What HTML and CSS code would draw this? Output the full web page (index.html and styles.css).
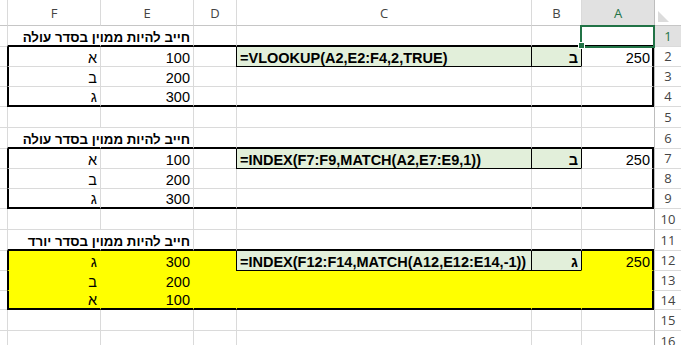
FILE: index.html
```
<!DOCTYPE html>
<html lang="he">
<head>
  <meta charset="UTF-8">
  <title>VLOOKUP / INDEX MATCH</title>
  <link rel="stylesheet" href="styles.css">
</head>
<body>
  <div class="sheet">
    <!-- column headers -->
    <div class="rn corner"><svg width="11" height="11"><polygon points="0,0 0,11 11,11" fill="#dcdcdc"/></svg></div>
    <div class="hd on">A</div><div class="hd">B</div><div class="hd">C</div><div class="hd">D</div><div class="hd">E</div><div class="hd">F</div><div class="hd"></div>

    <!-- 1 -->
    <div class="rn on">1</div>
    <div class="tb cur"></div><div class="tb"></div><div class="tb"></div><div class="tb"></div><div class="tb sp b"><span class="note">חייב להיות ממוין בסדר עולה</span></div><div class="tb"></div><div></div>
    <!-- 2 -->
    <div class="rn">2</div>
    <div class="rb gl"><span>250</span></div><div class="res b"><span>ב</span></div><div class="res b" dir="ltr"><span>=VLOOKUP(A2,E2:F4,2,TRUE)</span></div><div></div><div><span>100</span></div><div class="lb"><span>א</span></div><div></div>
    <!-- 3 -->
    <div class="rn">3</div>
    <div class="rb"></div><div></div><div></div><div></div><div><span>200</span></div><div class="lb"><span>ב</span></div><div></div>
    <!-- 4 -->
    <div class="rn">4</div>
    <div class="rb bb"></div><div class="bb"></div><div class="bb"></div><div class="bb"></div><div class="bb"><span>300</span></div><div class="lb bb"><span>ג</span></div><div></div>
    <!-- 5 -->
    <div class="rn">5</div>
    <div></div><div></div><div></div><div></div><div></div><div></div><div></div>
    <!-- 6 -->
    <div class="rn">6</div>
    <div class="tb"></div><div class="tb"></div><div class="tb"></div><div class="tb"></div><div class="tb sp b"><span class="note">חייב להיות ממוין בסדר עולה</span></div><div class="tb"></div><div></div>
    <!-- 7 -->
    <div class="rn">7</div>
    <div class="rb gl"><span>250</span></div><div class="res b"><span>ב</span></div><div class="res b" dir="ltr"><span>=INDEX(F7:F9,MATCH(A2,E7:E9,1))</span></div><div></div><div><span>100</span></div><div class="lb"><span>א</span></div><div></div>
    <!-- 8 -->
    <div class="rn">8</div>
    <div class="rb"></div><div></div><div></div><div></div><div><span>200</span></div><div class="lb"><span>ב</span></div><div></div>
    <!-- 9 -->
    <div class="rn">9</div>
    <div class="rb bb"></div><div class="bb"></div><div class="bb"></div><div class="bb"></div><div class="bb"><span>300</span></div><div class="lb bb"><span>ג</span></div><div></div>
    <!-- 10 -->
    <div class="rn">10</div>
    <div></div><div></div><div></div><div></div><div></div><div></div><div></div>
    <!-- 11 -->
    <div class="rn">11</div>
    <div class="tb"></div><div class="tb"></div><div class="tb"></div><div class="tb"></div><div class="tb sp b"><span class="note">חייב להיות ממוין בסדר יורד</span></div><div class="tb"></div><div></div>
    <!-- 12 -->
    <div class="rn">12</div>
    <div class="y rb gl"><span>250</span></div><div class="res b"><span>ג</span></div><div class="res b" dir="ltr"><span>=INDEX(F12:F14,MATCH(A12,E12:E14,-1))</span></div><div class="y"></div><div class="y"><span>300</span></div><div class="y lb"><span>ג</span></div><div></div>
    <!-- 13 -->
    <div class="rn">13</div>
    <div class="y rb"></div><div class="y"></div><div class="y"></div><div class="y"></div><div class="y"><span>200</span></div><div class="y lb"><span>ב</span></div><div></div>
    <!-- 14 -->
    <div class="rn">14</div>
    <div class="y rb bb"></div><div class="y bb"></div><div class="y bb"></div><div class="y bb"></div><div class="y bb"><span>100</span></div><div class="y lb bb"><span>א</span></div><div></div>
    <!-- 15 -->
    <div class="rn">15</div>
    <div></div><div></div><div></div><div></div><div></div><div></div><div></div>
    <!-- 16 -->
    <div class="rn">16</div>
    <div></div><div></div><div></div><div></div><div></div><div></div><div></div>
  </div>
</body>
</html>
```

FILE: styles.css
```
body {
  margin: 0;
  background: #fff;
  overflow: hidden;
}
.sheet {
  display: grid;
  direction: rtl;
  grid-template-columns: 27px 73px 50px 295px 43px 93px 93px 7px;
  grid-template-rows: 26px 21px 20px 20px 20px 21px 21px 20px 20px 20px 21px 21px 20px 20px 19px 21px 21px;
  font-family: "Liberation Sans", Arial, sans-serif;
  font-size: 14.5px;
  line-height: 15px;
  color: #000;
}
.sheet > div {
  box-sizing: border-box;
  display: flex;
  align-items: flex-end;
  padding: 0 3px;
  border-left: 1px solid #dadada;
  border-bottom: 1px solid #dadada;
  white-space: nowrap;
  min-width: 0;
}
/* last partial column has no left gridline */
.sheet > div:nth-child(8n) {
  border-left: 0;
  padding: 0;
}
.hd {
  font-family: "Open Sans", sans-serif;
  font-size: 13px;
  color: #444;
  justify-content: center;
  padding-bottom: 4px !important;
  border-bottom-color: #c6c6c6 !important;
}
.rn {
  font-family: "Open Sans", sans-serif;
  font-size: 13px;
  color: #444;
  justify-content: center;
  align-items: center !important;
  padding: 0 !important;
  border-left-color: #bdbdbd !important;
}
.corner {
  justify-content: flex-end;
  align-items: flex-end !important;
  padding: 0 0 3px 3px !important;
  border-bottom-color: #c6c6c6 !important;
}
.on {
  background: #e1e1e1;
  color: #217346;
}
.b { font-weight: bold; }
.note { font-size: 13.3px; }

.y {
  background: #ffff00;
  border-left-color: #ffff00 !important;
  border-bottom-color: #ffff00 !important;
}
.res {
  background: #e2efda;
  border-left-color: #000 !important;
  border-bottom-color: #000 !important;
}
.gl { border-left-color: #000 !important; }
.tb { border-bottom: 2px solid #000 !important; }
.bb { border-bottom: 2px solid #000 !important; }
.lb { border-left: 2px solid #000 !important; }
.rb {
  border-right: 2px solid #000;
  padding-right: 2px !important;
}
.sp { border-left-color: transparent !important; }

.cur {
  position: relative;
  z-index: 1;
  outline: 2px solid #217346;
  outline-offset: -1px;
}
.cur::after {
  content: "";
  position: absolute;
  left: -4px;
  bottom: -4px;
  width: 5px;
  height: 5px;
  background: #217346;
  border: 1px solid #fff;
}
```
